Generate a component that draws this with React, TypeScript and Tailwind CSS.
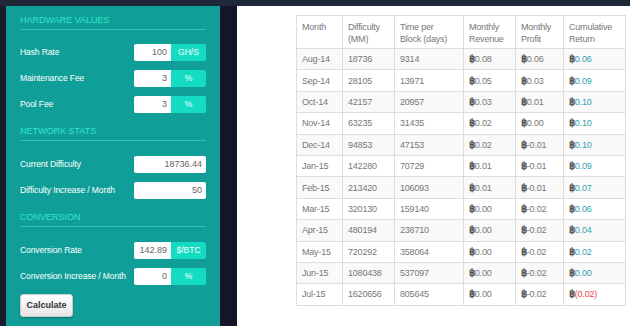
import React from "react";

const rows: [string, string, string, string, string, string][] = [
  ["Aug-14", "18736", "9314", "0.08", "0.06", "0.06"],
  ["Sep-14", "28105", "13971", "0.05", "0.03", "0.09"],
  ["Oct-14", "42157", "20957", "0.03", "0.01", "0.10"],
  ["Nov-14", "63235", "31435", "0.02", "0.00", "0.10"],
  ["Dec-14", "94853", "47153", "0.02", "-0.01", "0.10"],
  ["Jan-15", "142280", "70729", "0.01", "-0.01", "0.09"],
  ["Feb-15", "213420", "106093", "0.01", "-0.01", "0.07"],
  ["Mar-15", "320130", "159140", "0.00", "-0.02", "0.06"],
  ["Apr-15", "480194", "238710", "0.00", "-0.02", "0.04"],
  ["May-15", "720292", "358064", "0.00", "-0.02", "0.02"],
  ["Jun-15", "1080438", "537097", "0.00", "-0.02", "0.00"],
  ["Jul-15", "1620656", "805645", "0.00", "-0.02", "(0.02)"],
];

function Section({ title }: { title: string }) {
  return (
    <div className="border-b border-[#27c9b5] pb-[3px] text-[9px] leading-[12px] font-light text-[#33e4cc]">
      {title}
    </div>
  );
}

function Field({ label, value, addon }: { label: string; value: string; addon?: string }) {
  return (
    <div className="flex items-center h-[17px]">
      <div className="flex-1 whitespace-nowrap text-[8.5px] tracking-[-0.1px] text-white">{label}</div>
      <div className="flex w-[72px] h-[17px]">
        <div
          className={
            "flex-1 bg-white text-[#666] text-[9px] text-right pr-[4px] leading-[17px] " +
            (addon ? "rounded-l-[2px]" : "rounded-[2px]")
          }
        >
          {value}
        </div>
        {addon && (
          <div className="w-[35px] bg-[#14dcc2] rounded-r-[2px] text-white text-[8.5px] leading-[17px] text-center">
            {addon}
          </div>
        )}
      </div>
    </div>
  );
}

function Btc({ children, cls }: { children: React.ReactNode; cls?: string }) {
  return (
    <span>
      <span className="text-[#555] font-bold text-[10px]">฿</span>
      <span className={cls}>{children}</span>
    </span>
  );
}

export default function App() {
  return (
    <div
      className="w-[630px] h-[326px] overflow-hidden bg-white flex flex-col"
      style={{ fontFamily: '"Liberation Sans", Arial, sans-serif' }}
    >
      <div className="h-[6px] bg-[#1e2838]" />
      <div className="flex flex-1">
        <div className="w-[6px] bg-[#171b2c]" />
        <div className="w-[214px] bg-[#0f9f98] px-[14px] pt-[8px]">
          <Section title="HARDWARE VALUES" />
          <div className="flex flex-col gap-[9px] mt-[14px]">
            <Field label="Hash Rate" value="100" addon="GH/S" />
            <Field label="Maintenance Fee" value="3" addon="%" />
            <Field label="Pool Fee" value="3" addon="%" />
          </div>
          <div className="mt-[12px]">
            <Section title="NETWORK STATS" />
          </div>
          <div className="flex flex-col gap-[9px] mt-[15px]">
            <Field label="Current Difficulty" value="18736.44" />
            <Field label="Difficulty Increase / Month" value="50" />
          </div>
          <div className="mt-[12px]">
            <Section title="CONVERSION" />
          </div>
          <div className="flex flex-col gap-[9px] mt-[15px]">
            <Field label="Conversion Rate" value="142.89" addon="$/BTC" />
            <Field label="Conversion Increase / Month" value="0" addon="%" />
          </div>
          <button className="mt-[9px] w-[53px] h-[23px] rounded-[3px] bg-gradient-to-b from-white to-[#e6e6e6] border border-[#ccc] shadow-[0_1px_2px_rgba(0,0,0,0.3)] text-[9px] font-bold text-[#333]">
            Calculate
          </button>
        </div>
        <div className="w-[17px] bg-[#15152a]" />
        <div className="flex-1 pl-[59px] pt-[9px]">
          <table className="table-fixed border-collapse text-[9px] tracking-[-0.2px] leading-[12px] text-[#777] w-[329px] border border-[#ddd]">
            <colgroup>
              <col className="w-[46px]" />
              <col className="w-[52px]" />
              <col className="w-[69px]" />
              <col className="w-[52px]" />
              <col className="w-[48px]" />
              <col className="w-[62px]" />
            </colgroup>
            <thead>
              <tr className="h-[33px] align-top">
                {[
                  ["Month"],
                  ["Difficulty", "(MM)"],
                  ["Time per", "Block (days)"],
                  ["Monthly", "Revenue"],
                  ["Monthly", "Profit"],
                  ["Cumulative", "Return"],
                ].map((h, i) => (
                  <th key={i} className="border border-[#ddd] font-normal text-left px-[5px] pt-[5px]">
                    {h.map((l, j) => (
                      <div key={j}>{l}</div>
                    ))}
                  </th>
                ))}
              </tr>
            </thead>
            <tbody>
              {rows.map((r, i) => (
                <tr key={i} className={"h-[21.4px] " + (i % 2 === 0 ? "bg-[#f9f9f9]" : "bg-white")}>
                  <td className="border border-[#ddd] px-[5px]">{r[0]}</td>
                  <td className="border border-[#ddd] px-[5px]">{r[1]}</td>
                  <td className="border border-[#ddd] px-[5px]">{r[2]}</td>
                  <td className="border border-[#ddd] px-[5px]">
                    <Btc>{r[3]}</Btc>
                  </td>
                  <td className="border border-[#ddd] px-[5px]">
                    <Btc>{r[4]}</Btc>
                  </td>
                  <td className="border border-[#ddd] px-[5px]">
                    <Btc cls={r[5].startsWith("(") ? "text-[#e8454e]" : "text-[#35a2b0]"}>{r[5]}</Btc>
                  </td>
                </tr>
              ))}
            </tbody>
          </table>
        </div>
      </div>
    </div>
  );
}
